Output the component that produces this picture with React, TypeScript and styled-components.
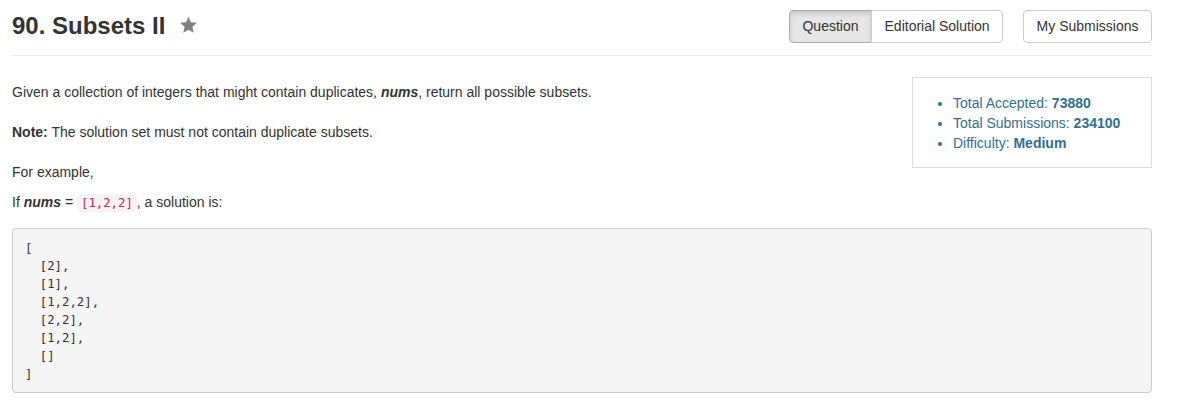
import React from "react";
import styled, { createGlobalStyle } from "styled-components";

const Global = createGlobalStyle`
  html, body { margin: 0; padding: 0; background: #fff; }
  body {
    font-family: "Liberation Sans", Arial, Helvetica, sans-serif;
    color: #333;
    font-size: 14px;
  }
`;

const Page = styled.div`
  width: 1140px;
  padding: 0 0 0 12px;
`;

const Header = styled.div`
  display: flex;
  align-items: center;
  justify-content: space-between;
  box-sizing: border-box;
  height: 56px;
  padding-bottom: 3px;
  border-bottom: 1px solid #eee;
`;

const Title = styled.h3`
  margin: 0;
  font-size: 24px;
  font-weight: bold;
  color: #333;
  display: flex;
  align-items: center;
  gap: 14px;
  line-height: 1;
`;

const StarIcon = styled.svg`
  width: 19px;
  height: 18px;
  fill: #808080;
  margin-top: -2px;
`;

const Actions = styled.div`
  display: flex;
  gap: 20px;
  margin-top: 1px;
`;

const Group = styled.div`
  display: flex;
`;

const Btn = styled.button<{ $active?: boolean; $pos?: "first" | "last" | "only" }>`
  font-family: "Liberation Sans", Arial, Helvetica, sans-serif;
  font-size: 14px;
  line-height: 19px;
  padding: 6px 12.5px;
  color: #333;
  border: 1px solid ${(p) => (p.$active ? "#adadad" : "#ccc")};
  background: ${(p) => (p.$active ? "#e6e6e6" : "#fff")};
  box-shadow: ${(p) => (p.$active ? "inset 0 3px 5px rgba(0,0,0,0.125)" : "none")};
  border-radius: ${(p) =>
    p.$pos === "first" ? "4px 0 0 4px" : p.$pos === "last" ? "0 4px 4px 0" : "4px"};
  margin-left: ${(p) => (p.$pos === "last" ? "-1px" : "0")};
  cursor: pointer;
`;

const Body = styled.div`
  padding-top: 21px;
`;

const Stats = styled.div`
  float: right;
  width: 240px;
  box-sizing: border-box;
  border: 1px solid #ddd;
  padding: 15px 0 14px;
`;

const StatList = styled.ul`
  margin: 0;
  padding-left: 40px;
  color: #31708f;
  font-size: 14px;
  line-height: 20px;
`;

const P = styled.p`
  margin: 0 0 10px;
  line-height: 30px;
  font-size: 14px;
`;

const InlineCode = styled.code`
  font-family: "DejaVu Sans Mono", "Liberation Mono", monospace;
  font-size: 12.3px;
  color: #c7254e;
  background: #f9f2f4;
  padding: 2px 4px;
  border-radius: 4px;
`;

const Pre = styled.pre`
  clear: both;
  margin: 0;
  padding: 9.5px 12px;
  background: #f5f5f5;
  border: 1px solid #ccc;
  border-radius: 4px;
  font-family: "DejaVu Sans Mono", "Liberation Mono", monospace;
  font-size: 12.3px;
  line-height: 18px;
  color: #333;
`;

export default function App() {
  return (
    <>
      <Global />
      <Page>
        <Header>
          <Title>
            90. Subsets II
            <StarIcon viewBox="0 0 24 24" aria-hidden>
              <path d="M12 1l3.3 7.3 7.9.8-6 5.3 1.8 7.8L12 18.2l-7 4 1.8-7.8-6-5.3 7.9-.8z" />
            </StarIcon>
          </Title>
          <Actions>
            <Group>
              <Btn $active $pos="first">Question</Btn>
              <Btn $pos="last">Editorial Solution</Btn>
            </Group>
            <Btn $pos="only">My Submissions</Btn>
          </Actions>
        </Header>
        <Body>
          <Stats>
            <StatList>
              <li>
                Total Accepted: <b>73880</b>
              </li>
              <li>
                Total Submissions: <b>234100</b>
              </li>
              <li>
                Difficulty: <b>Medium</b>
              </li>
            </StatList>
          </Stats>
          <P>
            Given a collection of integers that might contain duplicates, <b><i>nums</i></b>, return all
            possible subsets.
          </P>
          <P>
            <b>Note:</b> The solution set must not contain duplicate subsets.
          </P>
          <P>
            For example,
            <br />
            If <b><i>nums</i></b> = <InlineCode>[1,2,2]</InlineCode>, a solution is:
          </P>
          <Pre>{`[
  [2],
  [1],
  [1,2,2],
  [2,2],
  [1,2],
  []
]`}</Pre>
        </Body>
      </Page>
    </>
  );
}
